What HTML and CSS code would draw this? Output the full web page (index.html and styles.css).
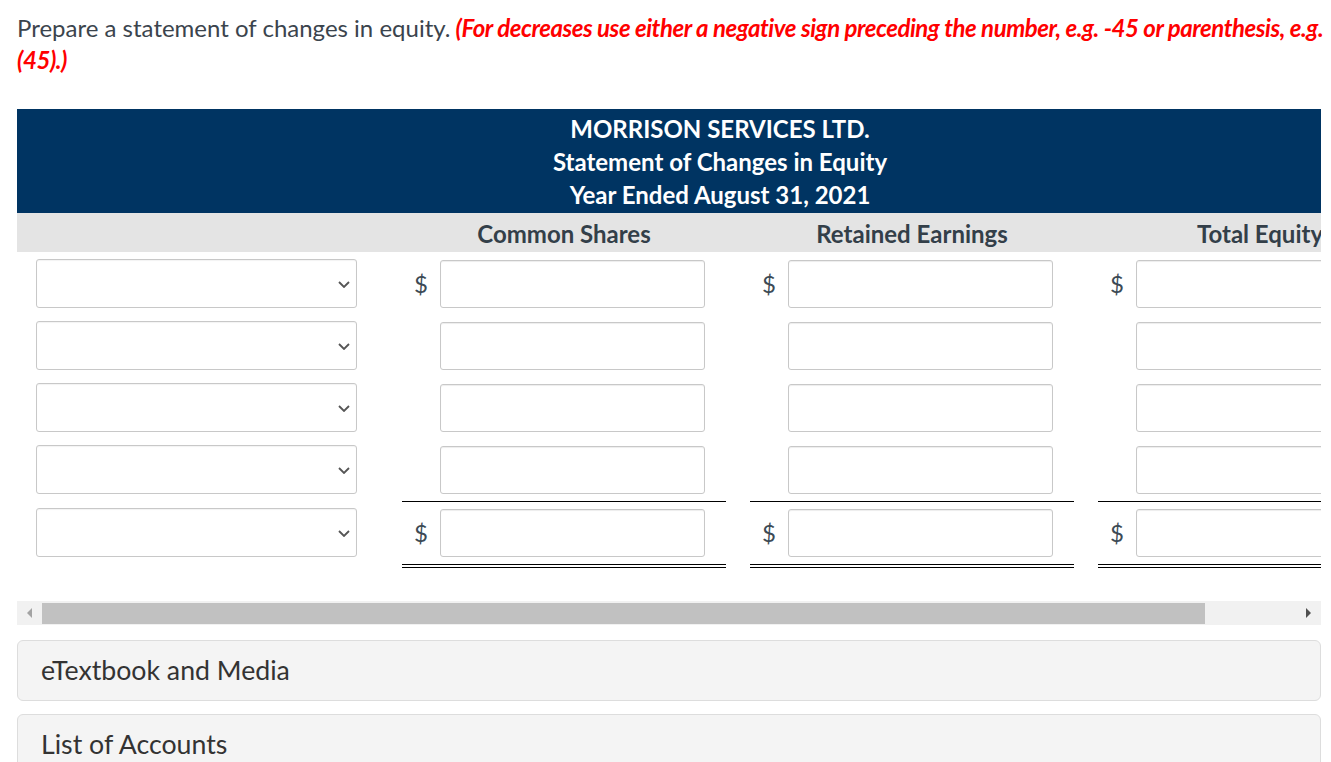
FILE: index.html
```html
<!DOCTYPE html>
<html lang="en">
<head>
<meta charset="utf-8">
<title>Statement of Changes in Equity</title>
<link rel="stylesheet" href="styles.css">
</head>
<body>
<p class="prompt">Prepare a statement of changes in equity. <strong class="hint">(For decreases use either a negative sign preceding the number, e.g. -45 or parenthesis, e.g. (45).)</strong></p>

<div class="scroller">
  <div class="sheet">
    <div class="title">
      <div>MORRISON SERVICES LTD.</div>
      <div>Statement of Changes in Equity</div>
      <div>Year Ended August 31, 2021</div>
    </div>
    <div class="grid colheads">
      <div></div>
      <div class="ch">Common Shares</div>
      <div class="ch">Retained Earnings</div>
      <div class="ch">Total Equity</div>
    </div>
    <div class="rows">
      <div class="grid row">
        <div class="lbl"><div class="select"><svg class="chev" viewBox="0 0 12 7"><path d="M1 1 L6 6 L11 1"/></svg></div></div>
        <div class="money"><div class="field"><span class="cur">$</span><input class="amt" type="text"></div></div>
        <div class="money"><div class="field"><span class="cur">$</span><input class="amt" type="text"></div></div>
        <div class="money"><div class="field"><span class="cur">$</span><input class="amt" type="text"></div></div>
      </div>
      <div class="grid row">
        <div class="lbl"><div class="select"><svg class="chev" viewBox="0 0 12 7"><path d="M1 1 L6 6 L11 1"/></svg></div></div>
        <div class="money"><div class="field"><span class="cur"></span><input class="amt" type="text"></div></div>
        <div class="money"><div class="field"><span class="cur"></span><input class="amt" type="text"></div></div>
        <div class="money"><div class="field"><span class="cur"></span><input class="amt" type="text"></div></div>
      </div>
      <div class="grid row">
        <div class="lbl"><div class="select"><svg class="chev" viewBox="0 0 12 7"><path d="M1 1 L6 6 L11 1"/></svg></div></div>
        <div class="money"><div class="field"><span class="cur"></span><input class="amt" type="text"></div></div>
        <div class="money"><div class="field"><span class="cur"></span><input class="amt" type="text"></div></div>
        <div class="money"><div class="field"><span class="cur"></span><input class="amt" type="text"></div></div>
      </div>
      <div class="grid row sub">
        <div class="lbl"><div class="select"><svg class="chev" viewBox="0 0 12 7"><path d="M1 1 L6 6 L11 1"/></svg></div></div>
        <div class="money"><div class="field"><span class="cur"></span><input class="amt" type="text"></div></div>
        <div class="money"><div class="field"><span class="cur"></span><input class="amt" type="text"></div></div>
        <div class="money"><div class="field"><span class="cur"></span><input class="amt" type="text"></div></div>
      </div>
      <div class="grid row total">
        <div class="lbl"><div class="select"><svg class="chev" viewBox="0 0 12 7"><path d="M1 1 L6 6 L11 1"/></svg></div></div>
        <div class="money"><div class="field"><span class="cur">$</span><input class="amt" type="text"></div><div class="dbl"></div></div>
        <div class="money"><div class="field"><span class="cur">$</span><input class="amt" type="text"></div><div class="dbl"></div></div>
        <div class="money"><div class="field"><span class="cur">$</span><input class="amt" type="text"></div><div class="dbl"></div></div>
      </div>
    </div>
  </div>
</div>

<div class="hscroll">
  <div class="sbtn"><span class="tri-left"></span></div>
  <div class="strack"><div class="thumb"></div></div>
  <div class="sbtn"><span class="tri-right"></span></div>
</div>

<div class="panel">eTextbook and Media</div>
<div class="panel">List of Accounts</div>
</body>
</html>
```

FILE: styles.css
```css
* { box-sizing: border-box; }

html, body {
  margin: 0;
  padding: 0;
  background: #fff;
}

body {
  padding-left: 17px;
  width: 1331px;
  font-family: Lato, "Liberation Sans", sans-serif;
  color: #3b444d;
  overflow: hidden;
}

.prompt {
  margin: 0;
  padding-top: 12px;
  width: 1312px;
  font-size: 24px;
  line-height: 32px;
  color: #3b444d;
}

.hint {
  color: #ff0000;
  font-weight: 700;
  font-style: italic;
  letter-spacing: -0.45px;
  margin-left: -1px;
}

.scroller {
  margin-top: 33px;
  width: 1304px;
  overflow: hidden;
  padding-bottom: 33px;
}

.sheet {
  width: 1417px;
}

.title {
  background: #003462;
  color: #fff;
  font-weight: 700;
  font-size: 24px;
  line-height: 33px;
  text-align: center;
  padding: 3px 11px 2px 0;
}

.grid {
  display: grid;
  grid-template-columns: 373px 348px 348px 348px;
}

.colheads {
  background: #e4e4e4;
  height: 39px;
  line-height: 41px;
  font-size: 24px;
  font-weight: 700;
  color: #333f49;
}

.ch {
  text-align: center;
  padding: 0 12px;
  white-space: nowrap;
}

.rows {
  padding-top: 7px;
}

.row {
  padding-bottom: 13px;
}

.row.sub {
  padding-bottom: 0;
}

.row.sub .money {
  padding-bottom: 7px;
  border-bottom: 1px solid #000;
}

.row.total {
  padding-top: 6px;
  padding-bottom: 0;
}

.row.total .field {
  margin-bottom: 7px;
}

.lbl {
  padding-left: 19px;
}

.select {
  position: relative;
  width: 321px;
  height: 49px;
  border: 1px solid #c8c8c8;
  border-radius: 3px;
  background: #fff;
  box-shadow: inset 0 1px 1px rgba(0, 0, 0, 0.05);
}

.chev {
  position: absolute;
  right: 6px;
  top: 21px;
  width: 12px;
  height: 7px;
  fill: none;
  stroke: #555;
  stroke-width: 1.8;
}

.money {
  margin: 0 12px;
}

.field {
  display: flex;
  align-items: center;
  height: 49px;
}

.cur {
  width: 38px;
  text-align: center;
  font-size: 24px;
  color: #3d4a55;
}

.amt {
  width: 265px;
  height: 48px;
  margin: 0;
  border: 1px solid #c8c8c8;
  border-radius: 3px;
  box-shadow: inset 0 1px 1px rgba(0, 0, 0, 0.075);
  background: #fff;
  font: inherit;
  padding: 0 8px;
}

.dbl {
  height: 4px;
  border-top: 1px solid #000;
  border-bottom: 1px solid #000;
}

.hscroll {
  display: flex;
  width: 1304px;
  height: 24px;
  background: #f1f1f1;
}

.sbtn {
  width: 25px;
  display: flex;
  align-items: center;
  justify-content: center;
}

.tri-left {
  width: 0;
  height: 0;
  border-top: 5px solid transparent;
  border-bottom: 5px solid transparent;
  border-right: 5px solid #a3a3a3;
}

.tri-right {
  width: 0;
  height: 0;
  border-top: 5px solid transparent;
  border-bottom: 5px solid transparent;
  border-left: 5px solid #505050;
}

.strack {
  flex: 1;
  padding-top: 2px;
}

.thumb {
  width: 1163px;
  height: 21px;
  background: #c1c1c1;
}

.panel {
  margin-top: 15px;
  width: 1304px;
  height: 61px;
  background: #f4f4f4;
  border: 1px solid #dddddd;
  border-radius: 6px;
  padding-left: 23px;
  font-size: 26.7px;
  line-height: 59px;
  color: #333;
}

.panel + .panel {
  margin-top: 13px;
}
```
